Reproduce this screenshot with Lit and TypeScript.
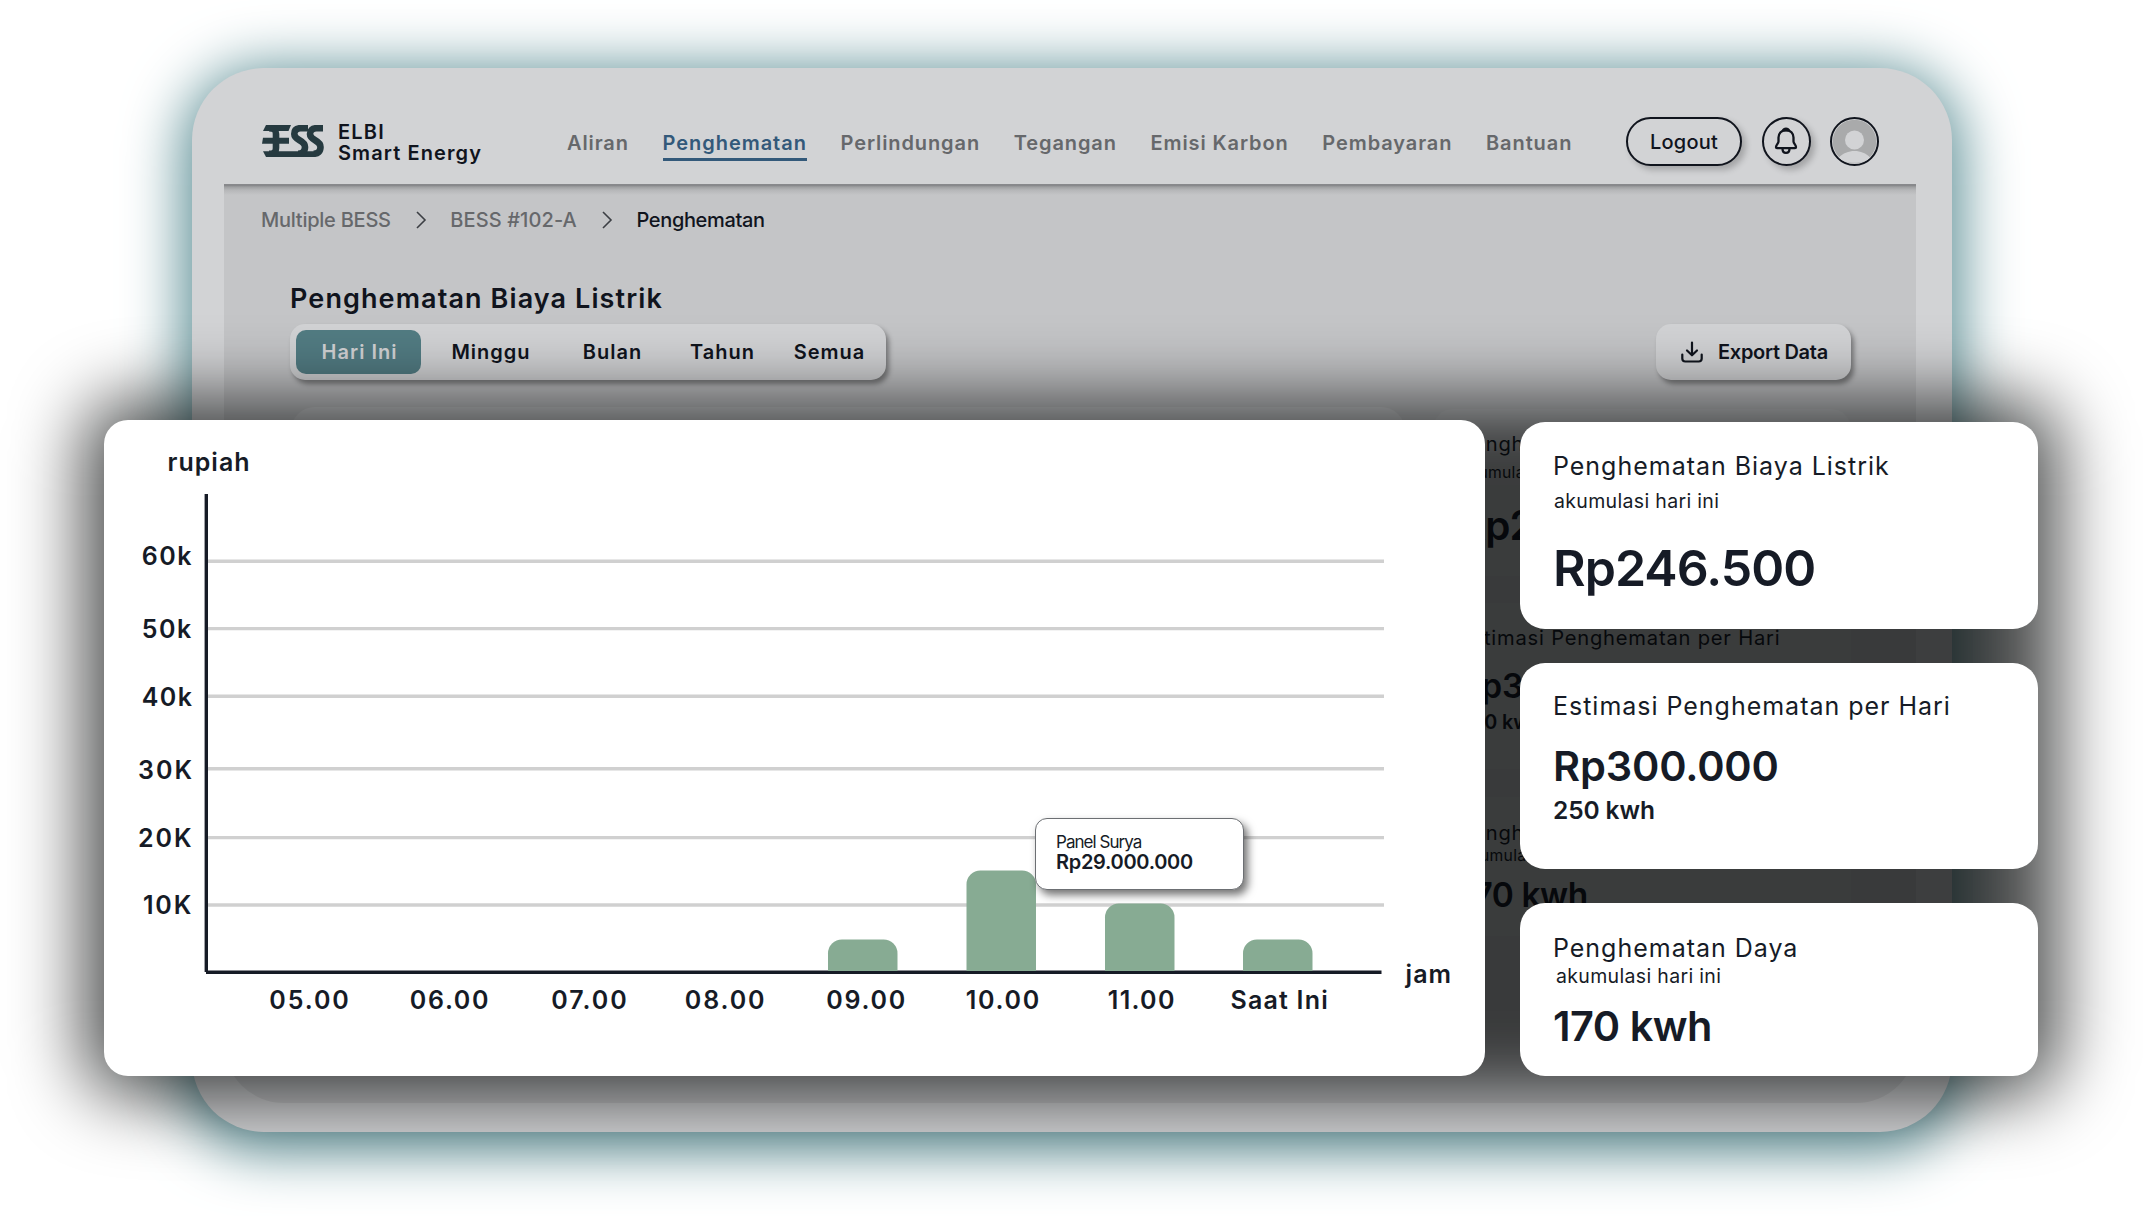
import {LitElement, css, html, svg} from "lit";
import {customElement, property} from "lit/decorators.js";
import {classMap} from "lit/directives/class-map.js";

interface Tick {
    label: string;
    x: number;
    baseline: number;
    line: number;
    spacing: number;
}

interface Hour {
    label: string;
    x: number;
    spacing: number;
}

interface Bar {
    x: number;
    top: number;
}

const TICKS: Tick[] = [
    {label: '60k', x: 37.7, baseline: 145, line: 141.2, spacing: 1.6},
    {label: '50k', x: 37.7, baseline: 217.5, line: 208.6, spacing: 1.6},
    {label: '40k', x: 37.7, baseline: 286, line: 276.3, spacing: 1.4},
    {label: '30K', x: 34, baseline: 359, line: 348.8, spacing: 2},
    {label: '20K', x: 34, baseline: 426.5, line: 417.6, spacing: 2},
    {label: '10K', x: 39, baseline: 493.5, line: 485, spacing: 1.8},
];

const HOURS: Hour[] = [
    {label: '05.00', x: 165.3, spacing: 1.9},
    {label: '06.00', x: 305.8, spacing: 1.7},
    {label: '07.00', x: 447.3, spacing: 2},
    {label: '08.00', x: 580.8, spacing: 1.9},
    {label: '09.00', x: 722.3, spacing: 1.7},
    {label: '10.00', x: 861.8, spacing: 1.7},
    {label: '11.00', x: 1003.8, spacing: 1.3},
    {label: 'Saat Ini', x: 1126.5, spacing: 1.2},
];

const BARS: Bar[] = [
    {x: 724, top: 519.5},
    {x: 862.5, top: 450.5},
    {x: 1001, top: 483.5},
    {x: 1139, top: 519.5},
];

const BAR_WIDTH = 69.5;
const BASELINE = 551;

const NAV = ['Aliran', 'Penghematan', 'Perlindungan', 'Tegangan', 'Emisi Karbon', 'Pembayaran', 'Bantuan'];
const PERIODS = ['Hari Ini', 'Minggu', 'Bulan', 'Tahun', 'Semua'];

@customElement('savings-chart')
export class SavingsChart extends LitElement {
    static styles = css`
        :host {
            display: block;
            position: relative;
            width: 1381px;
            height: 656px;
            border-radius: 24px;
            background-color: #ffffff;
        }
        .plot {
            display: block;
            font-family: "Inter", "Liberation Sans", sans-serif;
            font-size: 25px;
            font-weight: 600;
            fill: #161b26;
        }
        .grid-line {
            stroke: #d0d0d0;
            stroke-width: 3.4;
        }
        .axis {
            stroke: #161b26;
            stroke-width: 3.4;
        }
        .bar {
            fill: #87ab93;
        }
        .tooltip {
            position: absolute;
            left: 931px;
            top: 398px;
            box-sizing: border-box;
            width: 209px;
            height: 72px;
            padding: 13px 0 0 20px;
            border: 1px solid #6c6f73;
            border-radius: 12px;
            background-color: #ffffff;
            box-shadow: 4px 5px 8px rgba(0, 0, 0, 0.55);
            color: #161b26;
            white-space: nowrap;
        }
        .tooltip-label {
            font-size: 17px;
            line-height: 20px;
            letter-spacing: -0.95px;
        }
        .tooltip-value {
            font-size: 20px;
            line-height: 20px;
            font-weight: 600;
            letter-spacing: -0.3px;
        }
    `

    private barPath(bar: Bar) {
        const r = 14;
        return `M${bar.x} ${BASELINE}V${bar.top + r}a${r} ${r} 0 0 1 ${r} ${-r}h${BAR_WIDTH - 2 * r}a${r} ${r} 0 0 1 ${r} ${r}V${BASELINE}z`;
    }

    protected render() {
        return html`
            <svg class="plot" width="1381" height="656" viewBox="0 0 1381 656">
                <text x="63.5" y="50.5" letter-spacing="1">rupiah</text>
                ${TICKS.map(tick => svg`
                    <text x=${tick.x} y=${tick.baseline} letter-spacing=${tick.spacing}>${tick.label}</text>
                    <line class="grid-line" x1="104" x2="1280" y1=${tick.line} y2=${tick.line}></line>
                `)}
                <line class="axis" x1="102.3" x2="102.3" y1="74" y2="552"></line>
                <line class="axis" x1="102" x2="1277.5" y1="552.3" y2="552.3"></line>
                ${BARS.map(bar => svg`<path class="bar" d=${this.barPath(bar)}></path>`)}
                ${HOURS.map(hour => svg`
                    <text x=${hour.x} y="588.5" letter-spacing=${hour.spacing}>${hour.label}</text>
                `)}
                <text x="1301.5" y="562.5" letter-spacing="1.1">jam</text>
            </svg>
            <div class="tooltip">
                <div class="tooltip-label">Panel Surya</div>
                <div class="tooltip-value">Rp29.000.000</div>
            </div>
        `;
    }
}

@customElement('savings-summary')
export class SavingsSummary extends LitElement {
    @property({type: Boolean, reflect: true}) muted = false;

    static styles = css`
        :host {
            display: grid;
            grid-template-rows: 207px 205.5px 173px;
            row-gap: 34.2px;
            width: 518px;
            color: #161b26;
        }
        .card {
            box-sizing: border-box;
            padding-left: 33px;
            border-radius: 25px;
            background-color: #ffffff;
            white-space: nowrap;
        }
        :host([muted]) .card {
            background-color: #c9cacc;
        }
        .cost {
            padding-top: 29px;
        }
        .estimate {
            padding-top: 28px;
        }
        .power {
            padding-top: 30px;
        }
        .title {
            font-size: 25px;
            line-height: 30px;
            letter-spacing: 0.98px;
        }
        .note {
            margin-top: 8px;
            padding-left: 1px;
            font-size: 19.5px;
            line-height: 24px;
            letter-spacing: 0.33px;
        }
        .value {
            margin-top: 23px;
            font-size: 41.5px;
            line-height: 44px;
            font-weight: 600;
            letter-spacing: -0.15px;
        }
        .energy {
            margin-top: 7px;
            font-size: 24.5px;
            line-height: 30px;
            font-weight: 600;
            letter-spacing: -0.1px;
        }
        .cost .value {
            margin-top: 30px;
            font-size: 50px;
            line-height: 50px;
            letter-spacing: -0.95px;
        }
        .power .note {
            margin-top: 1px;
            padding-left: 3px;
        }
        .power .value {
            margin-top: 16px;
            letter-spacing: -0.5px;
        }
    `

    protected render() {
        return html`
            <div class="card cost">
                <div class="title">Penghematan Biaya Listrik</div>
                <div class="note">akumulasi hari ini</div>
                <div class="value">Rp246.500</div>
            </div>
            <div class="card estimate">
                <div class="title">Estimasi Penghematan per Hari</div>
                <div class="value">Rp300.000</div>
                <div class="energy">250 kwh</div>
            </div>
            <div class="card power">
                <div class="title">Penghematan Daya</div>
                <div class="note">akumulasi hari ini</div>
                <div class="value">170 kwh</div>
            </div>
        `;
    }
}

@customElement('app-header')
export class AppHeader extends LitElement {
    static styles = css`
        :host {
            display: flex;
            align-items: center;
            box-sizing: border-box;
            height: 116px;
            padding: 30px 73px 0 70px;
            color: #10141d;
            font-size: 20px;
            white-space: nowrap;
        }
        .brand {
            display: flex;
            align-items: center;
            gap: 14px;
            width: 305px;
            font-weight: 600;
            line-height: 20.5px;
            letter-spacing: 1.1px;
        }
        .brand-text {
            padding-top: 3px;
        }
        .logo {
            fill: #263a40;
            stroke: #263a40;
        }
        .brand-name {
            letter-spacing: 1.2px;
        }
        .nav {
            display: flex;
            gap: 33.7px;
            padding-top: 4px;
            font-weight: 600;
            line-height: 24px;
            letter-spacing: 0.9px;
            color: #66686b;
        }
        .link {
            padding-bottom: 3px;
            border-bottom: 3px solid transparent;
            margin-bottom: -6px;
        }
        .link.active {
            letter-spacing: 0.95px;
            color: #33597a;
            border-bottom-color: #33597a;
        }
        .actions {
            display: flex;
            gap: 19.5px;
            margin-left: auto;
        }
        .pill {
            display: flex;
            align-items: center;
            justify-content: center;
            box-sizing: border-box;
            width: 49px;
            height: 49px;
            border: 2px solid #10141d;
            border-radius: 25px;
            box-shadow: 4px 4px 6px rgba(0, 0, 0, 0.22);
            background-color: #d2d3d5;
        }
        .pill.logout {
            width: 116px;
            padding-top: 2px;
            font-weight: 500;
            letter-spacing: 0.2px;
        }
        .pill.avatar {
            box-shadow: none;
            overflow: hidden;
        }
    `

    protected render() {
        return html`
            <div class="brand">
                <svg class="logo" width="62" height="32" viewBox="0 0 62 32">
                    <g stroke="none">
                        <path d="M4 0H29L26.500 6H1z"></path>
                        <path d="M1 12.700H27V18.700H0z"></path>
                        <path d="M1 26.200H52V32H4z"></path>
                    </g>
                    <g fill="none" stroke-width="6.6">
                        <path d="M7 3.200C12 3.200 14 5 14 9V23C14 27 12 28.800 7 28.800"></path>
                        <path d="M46 3.200H38.500C34 3.200 32.300 5.500 32.300 9C32.300 16 43 14.500 43 22C43 26.500 40.500 28.800 36 28.800"></path>
                        <path d="M61 3.200H54.500C50 3.200 48 5.500 48 9C48 16 58.500 14.500 58.500 22C58.500 26.500 56 28.800 51.500 28.800"></path>
                    </g>
                </svg>
                <div class="brand-text">
                    <div class="brand-name">ELBI</div>
                    <div>Smart Energy</div>
                </div>
            </div>
            <nav class="nav">
                ${NAV.map(name => html`
                    <span class=${classMap({link: true, active: name === 'Penghematan'})}>${name}</span>
                `)}
            </nav>
            <div class="actions">
                <div class="pill logout">Logout</div>
                <div class="pill">
                    <svg width="24" height="28" viewBox="0 0 24 28" fill="none" stroke="#10141d" stroke-width="2.3" stroke-linejoin="round">
                        <path d="M12 3C7.500 3 4.500 6.500 4.500 10.500V14.500C4.500 16.500 2 18 2 20.200C2 20.800 2.400 21.200 3 21.200H21C21.600 21.200 22 20.800 22 20.200C22 18 19.500 16.500 19.500 14.500V10.500C19.500 6.500 16.500 3 12 3z"></path>
                        <path d="M8.500 21.500C8.500 27.300 15.500 27.300 15.500 21.500"></path>
                        <path d="M9.200 3.400C9.800 1 14.200 1 14.800 3.400z" fill="#10141d"></path>
                    </svg>
                </div>
                <div class="pill avatar">
                    <svg width="45" height="45" viewBox="0 0 46 46">
                        <circle cx="23" cy="23" r="22.300" fill="#a9aaab"></circle>
                        <circle cx="23" cy="21.500" r="9.700" fill="#d2d3d5"></circle>
                        <path d="M7 39.500C15 30.500 31 30.500 39 39.500C34 46.500 12 46.500 7 39.500z" fill="#d2d3d5"></path>
                    </svg>
                </div>
            </div>
        `;
    }
}

@customElement('app-root')
export class AppRoot extends LitElement {
    static styles = css`
        :host {
            display: block;
            font-family: "Inter", "Liberation Sans", sans-serif;
        }
        .stage {
            position: relative;
            box-sizing: border-box;
            width: 2144px;
            height: 1216px;
            padding: 68px 192px 84px;
            overflow: hidden;
            background-color: #ffffff;
        }
        .device {
            box-sizing: border-box;
            height: 1064px;
            border-radius: 72px;
            background-color: #d2d3d5;
            box-shadow: 0 9px 58px 9px #588c93;
        }
        .screen {
            box-sizing: border-box;
            height: 919px;
            margin: 0 36px 0 32px;
            border-radius: 0 0 60px 60px;
            background: linear-gradient(#88898c 0, #88898c 1.5px, #9fa0a2 3px, #b5b6b8 6px, #c4c5c7 11px);
            color: #10141d;
            white-space: nowrap;
        }
        .breadcrumb {
            display: flex;
            align-items: center;
            gap: 23.8px;
            padding: 24px 0 0 37px;
            font-size: 20px;
            line-height: 24px;
            color: #66686b;
        }
        .crumb {
            font-weight: 500;
            letter-spacing: -0.25px;
        }
        .crumb.unit {
            letter-spacing: 0.1px;
        }
        .crumb.current {
            letter-spacing: -0.35px;
            color: #10141d;
        }
        .heading {
            margin: 51px 0 0 66px;
            font-size: 27px;
            line-height: 32px;
            font-weight: 600;
            letter-spacing: 1.1px;
        }
        .toolbar {
            display: flex;
            justify-content: space-between;
            padding: 9px 65px 0 66px;
            font-size: 20px;
            font-weight: 600;
        }
        .panel {
            box-sizing: border-box;
            height: 56px;
            border-radius: 15px;
            background-color: #d2d3d5;
            box-shadow: 3px 4px 5px rgba(0, 0, 0, 0.38);
        }
        .tabs {
            display: grid;
            grid-template-columns: 125px 138px 105px 115px 99px;
            width: 596px;
            padding: 6px;
            letter-spacing: 1px;
        }
        .tab {
            display: flex;
            align-items: center;
            justify-content: center;
            padding-left: 2px;
            border-radius: 10px;
        }
        .tab.active {
            background-color: #527c83;
            color: #d2d3d5;
        }
        .export {
            display: flex;
            align-items: center;
            gap: 15px;
            width: 195px;
            padding-left: 25px;
            letter-spacing: -0.3px;
        }
        .backdrop {
            display: flex;
            gap: 28px;
            padding: 27px 0 0 67px;
        }
        .backdrop-chart {
            width: 1114px;
            height: 529px;
            border-radius: 24px;
            background-color: #cecfd1;
        }
        .backdrop-summary {
            zoom: 0.807;
            margin-top: 2px;
        }
        .overlay {
            position: absolute;
            left: 104px;
            top: 420px;
            display: flex;
            gap: 35px;
            width: 1934px;
            height: 656px;
            isolation: isolate;
        }
        .overlay::before {
            content: "";
            position: absolute;
            z-index: -1;
            inset: -20px;
            border-radius: 44px;
            background-color: rgba(0, 2, 2, 0.71);
            filter: blur(36px);
        }
        .overlay-summary {
            margin-top: 2px;
        }
    `

    private renderChevron() {
        return html`
            <svg width="12" height="18" viewBox="0 0 12 18" fill="none" stroke="#3c3f44" stroke-width="1.6">
                <path d="M2 1L10 9L2 17"></path>
            </svg>
        `;
    }

    protected render() {
        return html`
            <div class="stage">
                <div class="device">
                    <app-header></app-header>
                    <div class="screen">
                        <div class="breadcrumb">
                            <span class="crumb">Multiple BESS</span>
                            ${this.renderChevron()}
                            <span class="crumb unit">BESS #102-A</span>
                            ${this.renderChevron()}
                            <span class="crumb current">Penghematan</span>
                        </div>
                        <div class="heading">Penghematan Biaya Listrik</div>
                        <div class="toolbar">
                            <div class="panel tabs">
                                ${PERIODS.map((period, i) => html`
                                    <span class=${classMap({tab: true, active: i === 0})}>${period}</span>
                                `)}
                            </div>
                            <div class="panel export">
                                <svg width="22" height="22" viewBox="0 0 22 22" fill="none" stroke="#10141d" stroke-width="2.2" stroke-linecap="round" stroke-linejoin="round">
                                    <path d="M11 1.500V14M6 9.500L11 14.300L16 9.500"></path>
                                    <path d="M1.300 13.500V17.500Q1.300 20.500 4.300 20.500H17.700Q20.700 20.500 20.700 17.500V13.500"></path>
                                </svg>
                                <span>Export Data</span>
                            </div>
                        </div>
                        <div class="backdrop">
                            <div class="backdrop-chart"></div>
                            <savings-summary class="backdrop-summary" muted></savings-summary>
                        </div>
                    </div>
                </div>
                <div class="overlay">
                    <savings-chart></savings-chart>
                    <savings-summary class="overlay-summary"></savings-summary>
                </div>
            </div>
        `;
    }
}
